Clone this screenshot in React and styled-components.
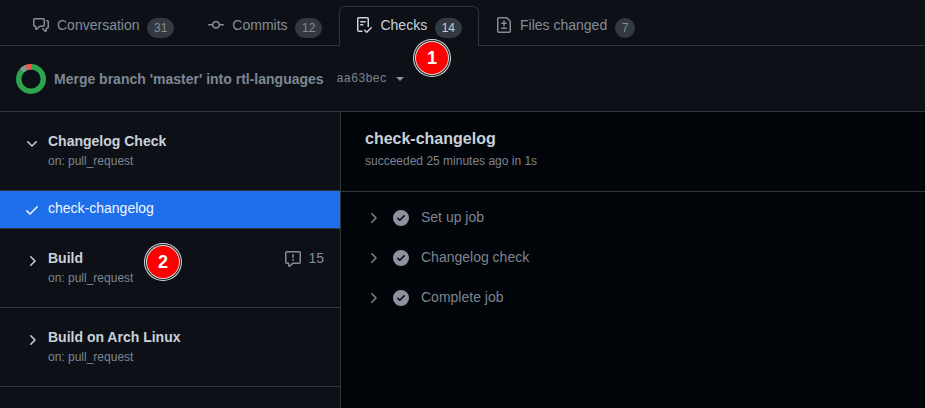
import React from 'react'
import styled, { createGlobalStyle } from 'styled-components'

const paths = {
  discussion: 'M1.75 1h8.5c.966 0 1.75.784 1.75 1.75v5.5A1.75 1.75 0 0 1 10.25 10H7.061l-2.574 2.573A1.458 1.458 0 0 1 2 11.543V10h-.25A1.75 1.75 0 0 1 0 8.25v-5.5C0 1.784.784 1 1.75 1ZM1.5 2.75v5.5c0 .138.112.25.25.25h1a.75.75 0 0 1 .75.75v2.19l2.72-2.72a.749.749 0 0 1 .53-.22h3.5a.25.25 0 0 0 .25-.25v-5.5a.25.25 0 0 0-.25-.25h-8.5a.25.25 0 0 0-.25.25Zm13 2a.25.25 0 0 0-.25-.25h-.5a.75.75 0 0 1 0-1.5h.5c.966 0 1.75.784 1.75 1.75v5.5A1.75 1.75 0 0 1 14.25 12H14v1.543a1.458 1.458 0 0 1-2.487 1.03L9.22 12.28a.749.749 0 0 1 .326-1.275.749.749 0 0 1 .734.215l2.22 2.22v-2.19a.75.75 0 0 1 .75-.75h1a.25.25 0 0 0 .25-.25Z',
  commit: 'M11.93 8.5a4.002 4.002 0 0 1-7.86 0H.75a.75.75 0 0 1 0-1.5h3.32a4.002 4.002 0 0 1 7.86 0h3.32a.75.75 0 0 1 0 1.5Zm-1.43-.75a2.5 2.5 0 1 0-5 0 2.5 2.5 0 0 0 5 0Z',
  checklist: 'M2.5 1.75v11.5c0 .138.112.25.25.25h3.17a.75.75 0 0 1 0 1.5H2.75A1.75 1.75 0 0 1 1 13.25V1.75C1 .784 1.784 0 2.75 0h8.5C12.216 0 13 .784 13 1.75v7.736a.75.75 0 0 1-1.5 0V1.75a.25.25 0 0 0-.25-.25h-8.5a.25.25 0 0 0-.25.25Zm13.274 9.537v-.001l-4.557 4.45a.75.75 0 0 1-1.055-.008l-1.943-1.95a.75.75 0 0 1 1.062-1.058l1.419 1.425 4.026-3.932a.75.75 0 1 1 1.048 1.074ZM4.75 4h4.5a.75.75 0 0 1 0 1.5h-4.5a.75.75 0 0 1 0-1.5ZM4 7.75A.75.75 0 0 1 4.75 7h2a.75.75 0 0 1 0 1.5h-2A.75.75 0 0 1 4 7.75Z',
  fileDiff: 'M1 1.75C1 .784 1.784 0 2.75 0h7.586c.464 0 .909.184 1.237.513l2.914 2.914c.329.328.513.773.513 1.237v9.586A1.75 1.75 0 0 1 13.25 16H2.75A1.75 1.75 0 0 1 1 14.25Zm1.75-.25a.25.25 0 0 0-.25.25v12.5c0 .138.112.25.25.25h10.5a.25.25 0 0 0 .25-.25V4.664a.25.25 0 0 0-.073-.177l-2.914-2.914a.25.25 0 0 0-.177-.073ZM8 3.25a.75.75 0 0 1 .75.75v1.5h1.5a.75.75 0 0 1 0 1.5h-1.5v1.5a.75.75 0 0 1-1.5 0V7h-1.5a.75.75 0 0 1 0-1.5h1.5V4A.75.75 0 0 1 8 3.25Zm-3 8a.75.75 0 0 1 .75-.75h4.5a.75.75 0 0 1 0 1.5h-4.5a.75.75 0 0 1-.75-.75Z',
  report: 'M0 1.75C0 .784.784 0 1.75 0h12.5C15.216 0 16 .784 16 1.75v9.5A1.75 1.75 0 0 1 14.25 13H8.06l-2.573 2.573A1.458 1.458 0 0 1 3 14.543V13H1.75A1.75 1.75 0 0 1 0 11.25Zm1.75-.25a.25.25 0 0 0-.25.25v9.5c0 .138.112.25.25.25h2a.75.75 0 0 1 .75.75v2.19l2.72-2.72a.749.749 0 0 1 .53-.22h6.5a.25.25 0 0 0 .25-.25v-9.5a.25.25 0 0 0-.25-.25Zm7 2.25v2.5a.75.75 0 0 1-1.5 0v-2.5a.75.75 0 0 1 1.5 0ZM9 9a1 1 0 1 1-2 0 1 1 0 0 1 2 0Z',
  checkFill: 'M8 16A8 8 0 1 1 8 0a8 8 0 0 1 0 16Zm3.78-9.72a.751.751 0 0 0-.018-1.042.751.751 0 0 0-1.042-.018L6.75 9.19 5.28 7.72a.751.751 0 0 0-1.042.018.751.751 0 0 0-.018 1.042l2 2a.75.75 0 0 0 1.06 0Z',
  check: 'M13.78 4.22a.75.75 0 0 1 0 1.06l-7.25 7.25a.75.75 0 0 1-1.06 0L2.22 9.28a.751.751 0 0 1 .018-1.042.751.751 0 0 1 1.042-.018L6 10.94l6.72-6.72a.75.75 0 0 1 1.06 0Z',
  down: 'M12.78 5.22a.749.749 0 0 1 0 1.06l-4.25 4.25a.749.749 0 0 1-1.06 0L3.22 6.28a.749.749 0 1 1 1.06-1.06L8 8.939l3.72-3.719a.749.749 0 0 1 1.06 0Z',
  right: 'M6.22 3.22a.75.75 0 0 1 1.06 0l4.25 4.25a.75.75 0 0 1 0 1.06l-4.25 4.25a.751.751 0 0 1-1.042-.018.751.751 0 0 1-.018-1.042L9.94 8 6.22 4.28a.75.75 0 0 1 0-1.06Z',
}

const Icon = ({ name, size = 16, ...rest }) => (
  <svg width={size} height={size} viewBox="0 0 16 16" fill="currentColor" {...rest}>
    <path d={paths[name]} />
  </svg>
)

const tabs = [
  { label: 'Conversation', icon: 'discussion', count: 31 },
  { label: 'Commits', icon: 'commit', count: 12 },
  { label: 'Checks', icon: 'checklist', count: 14, active: true },
  { label: 'Files changed', icon: 'fileDiff', count: 7 },
]

const workflows = [
  { title: 'Changelog Check', open: true, job: 'check-changelog' },
  { title: 'Build', alerts: 15 },
  { title: 'Build on Arch Linux' },
]

const steps = ['Set up job', 'Changelog check', 'Complete job']

const App = () => (
  <>
    <GlobalStyle />
    <Page>
      <TabBar>
        {tabs.map(tab => (
          <Tab key={tab.label} $active={tab.active}>
            <TabIcon name={tab.icon} />
            <span>{tab.label}</span>
            <Counter>{tab.count}</Counter>
          </Tab>
        ))}
      </TabBar>

      <CommitBar>
        <svg width="30" height="30" viewBox="0 0 30 30">
          <circle cx="15" cy="15" r="12.3" fill="none" stroke="#2da44e" strokeWidth="5.4" />
          <circle cx="15" cy="15" r="12.3" fill="none" stroke="#f85149" strokeWidth="5.4" pathLength="100" strokeDasharray="7 93" strokeDashoffset="-69" />
          <circle cx="15" cy="15" r="12.3" fill="none" stroke="#8b949e" strokeWidth="5.4" pathLength="100" strokeDasharray="7 93" strokeDashoffset="-62" />
        </svg>
        <CommitTitle>Merge branch 'master' into rtl-languages</CommitTitle>
        <Sha>aa63bec</Sha>
        <Caret />
      </CommitBar>

      <Body>
        <Sidebar>
          {workflows.map(flow => (
            <React.Fragment key={flow.title}>
              <Workflow>
                <Chevron name={flow.open ? 'down' : 'right'} />
                <div>
                  <WorkflowTitle>{flow.title}</WorkflowTitle>
                  <WorkflowEvent>on: pull_request</WorkflowEvent>
                </div>
                {flow.alerts && (
                  <Alerts>
                    <Icon name="report" />
                    {flow.alerts}
                  </Alerts>
                )}
              </Workflow>
              {flow.job && (
                <Job>
                  <Icon name="check" />
                  <span>{flow.job}</span>
                </Job>
              )}
            </React.Fragment>
          ))}
        </Sidebar>

        <Main>
          <JobHeader>
            <JobTitle>check-changelog</JobTitle>
            <JobMeta>succeeded 25 minutes ago in 1s</JobMeta>
          </JobHeader>
          <Steps>
            {steps.map(step => (
              <Step key={step}>
                <Icon name="right" />
                <Icon name="checkFill" />
                <span>{step}</span>
              </Step>
            ))}
          </Steps>
        </Main>
      </Body>

      <Marker $x={432} $y={58}>1</Marker>
      <Marker $x={163} $y={262}>2</Marker>
    </Page>
  </>
)

export default App

const GlobalStyle = createGlobalStyle`
  html, body {
    margin: 0;
    background: #0d1117;
  }
  body {
    font-family: "Liberation Sans", Arial, sans-serif;
    font-size: 14px;
  }
`
const Page = styled.div`
  position: relative;
  width: 925px;
  height: 408px;
  overflow: hidden;
  background: #0d1117;
  color: #848d97;
`
const TabBar = styled.div`
  display: flex;
  align-items: flex-end;
  height: 46px;
  padding: 6px 0 0 16px;
  box-sizing: border-box;
  border-bottom: 1px solid #30363d;
`
const Tab = styled.div`
  display: flex;
  align-items: center;
  height: 40px;
  padding: 0 16px 2px;
  box-sizing: border-box;
  margin-bottom: -1px;
  border: 1px solid ${props => (props.$active ? '#30363d' : 'transparent')};
  border-bottom: ${props => (props.$active ? '1px solid #0d1117' : '1px solid transparent')};
  border-radius: 6px 6px 0 0;
  color: ${props => (props.$active ? '#c9d1d9' : '#848d97')};
`
const TabIcon = styled(Icon)`
  margin-right: 8px;
`
const Counter = styled.span`
  margin: 6px 0 0 7.5px;
  min-width: 20px;
  height: 20px;
  padding: 0 7px;
  box-sizing: border-box;
  border-radius: 10px;
  background: rgba(110, 118, 129, 0.4);
  font-size: 12px;
  line-height: 20px;
  text-align: center;
`
const CommitBar = styled.div`
  display: flex;
  align-items: center;
  height: 66px;
  padding: 0 16px;
  box-sizing: border-box;
  border-bottom: 1px solid #30363d;
`
const CommitTitle = styled.span`
  margin-left: 8px;
  font-weight: 700;
  color: #7d8794;
`
const Sha = styled.span`
  margin-left: 13px;
  font-family: "Liberation Mono", monospace;
  font-size: 12px;
  color: #7d8590;
`
const Caret = styled.span`
  margin-left: 9px;
  width: 0;
  height: 0;
  border-style: solid;
  border-width: 4px 4px 0;
  border-color: #8b949e transparent transparent;
`
const Body = styled.div`
  display: flex;
  height: 296px;
`
const Sidebar = styled.div`
  width: 341px;
  box-sizing: border-box;
  border-right: 1px solid #30363d;
`
const Workflow = styled.div`
  display: flex;
  align-items: flex-start;
  height: 79px;
  padding: 21px 16px 0 24px;
  box-sizing: border-box;
  border-bottom: 1px solid #30363d;
`
const Chevron = styled(Icon)`
  flex: none;
  margin: 3px 8px 0 0;
  color: #c9d1d9;
`
const WorkflowTitle = styled.div`
  font-weight: 700;
  line-height: 16px;
  color: #c9d1d9;
`
const WorkflowEvent = styled.div`
  margin-top: 4px;
  font-size: 12px;
  line-height: 16px;
  color: #7d8590;
`
const Alerts = styled.div`
  display: flex;
  align-items: center;
  gap: 7px;
  margin-left: auto;
  line-height: 16px;
  svg {
    transform: translateY(1px);
  }
`
const Job = styled.div`
  display: flex;
  align-items: center;
  gap: 8px;
  height: 38px;
  padding: 0 0 2px 24px;
  box-sizing: border-box;
  border-bottom: 1px solid #30363d;
  background: #1f6feb;
  color: #f0f6fc;
  svg {
    margin-top: 3px;
  }
  span {
    margin-top: -2px;
  }
`
const Main = styled.div`
  flex: 1;
  background: #010409;
`
const JobHeader = styled.div`
  height: 80px;
  padding: 17px 24px 0;
  box-sizing: border-box;
  border-bottom: 1px solid #30363d;
`
const JobTitle = styled.div`
  font-size: 16px;
  font-weight: 700;
  line-height: 20px;
  color: #c9d1d9;
`
const JobMeta = styled.div`
  margin-top: 4px;
  font-size: 12px;
  line-height: 16px;
  color: #7d8590;
`
const Steps = styled.div`
  display: flex;
  flex-direction: column;
  padding-top: 5px;
`
const Step = styled.div`
  display: flex;
  align-items: center;
  height: 40px;
  padding-left: 25px;
  gap: 11px;
  color: #7d8590;
  svg:first-child {
    margin: 1px 0 0 -1px;
  }
  svg:nth-child(2) {
    margin: 1px 0 0 1px;
    color: #8b949e;
  }
  span {
    margin-left: 1px;
  }
`
const Marker = styled.div`
  position: absolute;
  left: ${props => props.$x - 16}px;
  top: ${props => props.$y - 16}px;
  width: 32px;
  height: 32px;
  border-radius: 50%;
  background: #ff0000;
  box-shadow: 0 0 0 1px #d8d8d8, 0 0 0 2px #222, 0 0 0 3px #d8d8d8;
  color: #fff;
  font-size: 18px;
  font-weight: 700;
  line-height: 32px;
  text-align: center;
`
